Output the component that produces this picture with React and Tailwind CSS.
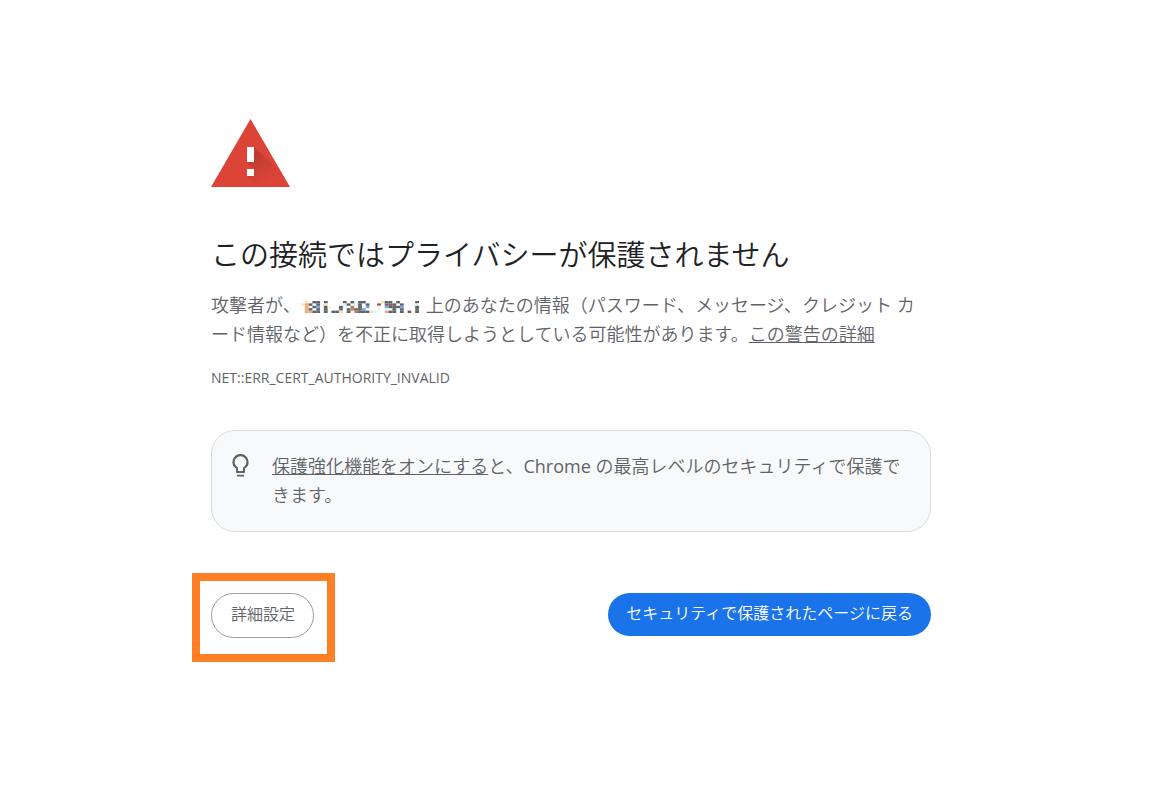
const colors = {
  D: "#5f6368",
  p: "#ffe0ae",
  o: "#ebab78",
  b: "#6cabee",
  c: "#d8f8ff",
  r: "#8c5b60",
  n: "#bb7d5d",
  y: "#fffacb",
};

const mosaic = [
  ".p.DD.D....D.DcDD....pDD.D....D",
  "poD.D.p....cD.cD.D..r.rrD.D...c",
  ".o.Db.Dy..Dc.n.D.b..y.bDDDb...D",
  ".oD.D.D...D.DnDDb...c.c.D.D...D",
  ".ooDD.D.DDp.D.nDDDpc..oDD.D.DyD",
];

function MaskedAddress() {
  return (
    <svg
      className="mr-[7px] inline h-3 w-[118px] align-[-1px]"
      viewBox="0 0 31 5"
      preserveAspectRatio="none"
      aria-hidden="true"
    >
      {mosaic.flatMap((row, y) =>
        [...row].map((cell, x) =>
          cell === "." ? null : (
            <rect key={`${x}-${y}`} x={x} y={y} width="1" height="1" fill={colors[cell]} />
          )
        )
      )}
    </svg>
  );
}

export default function App() {
  return (
    <main className="min-h-screen bg-white pt-[119px] pr-[39px] pl-6 font-['Open_Sans','Noto_Sans_CJK_JP',sans-serif] font-[350] text-[#5f6368]">
      <div className="mx-auto w-full max-w-[720px]">
        <svg className="block h-[68px] w-[79px]" viewBox="0 0 79 68" aria-hidden="true">
          <defs>
            <linearGradient id="shade" x1="43" y1="36" x2="58" y2="60" gradientUnits="userSpaceOnUse">
              <stop offset="0" stopColor="#bf3b30" />
              <stop offset="1" stopColor="#db4437" />
            </linearGradient>
          </defs>
          <path d="M39.5 0 79 68H0z" fill="#db4437" />
          <path d="M43 28 70 54V68H47L36 57 43 50l-7-7h7z" fill="url(#shade)" />
          <path d="M36 28h7v15h-7zM36 50h7v7h-7z" fill="#fff" />
        </svg>
        <h1 className="mt-12 text-[29px] leading-10 text-[#202124]">この接続ではプライバシーが保護されません</h1>
        <p className="mt-4 text-[18px] leading-[29px]">
          攻撃者が、<MaskedAddress />上のあなたの情報（パスワード、メッセージ、クレジット カード情報など）を不正に取得しようとしている可能性があります。<a href="#details" className="underline">この警告の詳細</a>
        </p>
        <p className="mt-[19px] text-[14px] leading-5 font-normal">NET::ERR_CERT_AUTHORITY_INVALID</p>
        <section className="mt-[42px] flex gap-5 rounded-3xl border border-[#dadce0] bg-[#f8f9fa] px-4 py-[21px]">
          <svg className="mt-0.5 h-6 w-6 shrink-0" viewBox="0 0 24 24" aria-hidden="true">
            <path
              d="M9 22.5h7v-1.8H9zM12.500 0a8 8 0 0 0-4.500 14.600v3.500c0 .5.4.9.9.9h7.200c.5 0 .9-.4.9-.9v-3.500A8 8 0 0 0 12.500 0zm2.500 13.500v3.500h-5v-3.500l-.9-.6a5.900 5.900 0 1 1 6.800 0z"
              fill="#5f6368"
            />
          </svg>
          <p className="text-[18px] leading-[29px]">
            <a href="#protection" className="underline">保護強化機能をオンにする</a>と、<span className="font-normal">Chrome</span> の最高レベルのセキュリティで保護できます。
          </p>
        </section>
        <div className="mt-[41px] flex items-start justify-between">
          <div className="-ml-[19px] border-8 border-[#ff7f27] pt-3 pr-[13px] pb-4 pl-[11px]">
            <button className="rounded-full border border-[#9aa0a6] pt-2 pr-[18px] pb-[11px] pl-[19px] text-base">詳細設定</button>
          </div>
          <button className="mt-5 rounded-full bg-[#1a73e8] px-[18px] pt-2 pb-[11px] text-base text-white">セキュリティで保護されたページに戻る</button>
        </div>
      </div>
    </main>
  );
}
